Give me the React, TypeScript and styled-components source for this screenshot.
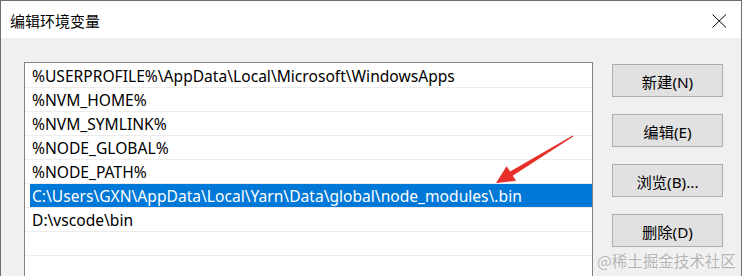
import React from "react";
import styled, { createGlobalStyle } from "styled-components";

const Global = createGlobalStyle`
  html, body { margin: 0; padding: 0; background: #f0f0f0; }
  * { box-sizing: border-box; }
`;

const UI = `"Noto Sans", "Noto Sans CJK SC", sans-serif`;

const Window = styled.div`
  position: relative;
  width: 742px;
  height: 276px;
  overflow: hidden;
  background: #f0f0f0;
  border: 1px solid #6e6e6e;
  border-bottom: none;
  display: flex;
  flex-direction: column;
  font-family: ${UI};
`;

const TitleBar = styled.div`
  height: 37px;
  flex: none;
  background: #ffffff;
  display: flex;
  align-items: center;
  justify-content: space-between;
  padding: 2px 14px 0 9px;
`;

const Title = styled.span`
  font-family: "Noto Sans CJK SC", sans-serif;
  font-size: 15px;
  color: #000;
`;

const Body = styled.div`
  flex: 1;
  display: flex;
  align-items: flex-start;
  padding: 24px 0 0 23px;
  gap: 19px;
`;

const List = styled.div`
  width: 569px;
  height: 240px;
  flex: none;
  background: #fff;
  border: 1px solid #828282;
  padding-top: 1px;
  display: flex;
  flex-direction: column;
`;

const Row = styled.div`
  height: 24px;
  flex: none;
  border-bottom: 1px solid #ececec;
  display: flex;
  align-items: stretch;
`;

const RowInner = styled.div<{ $selected?: boolean }>`
  flex: 1;
  margin-left: 5px;
  padding: 1px 0 0 2px;
  display: flex;
  align-items: center;
  font-size: 15.6px;
  white-space: nowrap;
  color: ${(p) => (p.$selected ? "#ffffff" : "#000000")};
  background: ${(p) => (p.$selected ? "#0078d7" : "transparent")};
`;

const Buttons = styled.div`
  width: 111px;
  flex: none;
  display: flex;
  flex-direction: column;
  gap: 17px;
  padding-top: 2px;
`;

const Button = styled.div`
  height: 33px;
  background: #e1e1e1;
  border: 1px solid #adadad;
  display: flex;
  align-items: center;
  justify-content: center;
  font-size: 15.3px;
  color: #000;
`;

const Watermark = styled.div`
  position: absolute;
  left: 596px;
  top: 248px;
  font-family: "Noto Sans CJK SC", sans-serif;
  font-size: 15.5px;
  color: #b4b4b4;
  text-shadow: 0 0 2px #ffffff;
`;

const Overlay = styled.svg`
  position: absolute;
  left: -1px;
  top: -1px;
  pointer-events: none;
`;

const rows = [
  "%USERPROFILE%\\AppData\\Local\\Microsoft\\WindowsApps",
  "%NVM_HOME%",
  "%NVM_SYMLINK%",
  "%NODE_GLOBAL%",
  "%NODE_PATH%",
  "C:\\Users\\GXN\\AppData\\Local\\Yarn\\Data\\global\\node_modules\\.bin",
  "D:\\vscode\\bin",
  "",
  "",
];

export default function App() {
  return (
    <>
      <Global />
      <Window>
        <TitleBar>
          <Title>编辑环境变量</Title>
          <svg width="15" height="14" viewBox="0 0 15 14">
            <path d="M0.5 0.5 L14 13.5 M14 0.5 L0.5 13.5" stroke="#000" strokeWidth="1" fill="none" />
          </svg>
        </TitleBar>
        <Body>
          <List>
            {rows.map((r, i) => (
              <Row key={i}>
                <RowInner $selected={i === 5}>{r}</RowInner>
              </Row>
            ))}
          </List>
          <Buttons>
            <Button>新建(N)</Button>
            <Button>编辑(E)</Button>
            <Button>浏览(B)...</Button>
            <Button>删除(D)</Button>
          </Buttons>
        </Body>
        <Watermark>@稀土掘金技术社区</Watermark>
        <Overlay width="742" height="276" viewBox="0 0 742 276">
          <polygon
            points="572.7,135.4 510.1,171.5 506.6,166.2 496,183 516.2,180.8 512.7,175.7 573.3,136.6"
            fill="#e8302a"
          />
        </Overlay>
      </Window>
    </>
  );
}
